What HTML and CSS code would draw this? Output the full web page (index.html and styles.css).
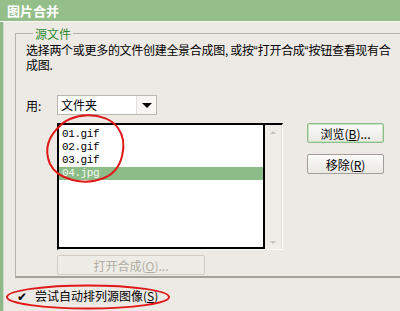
FILE: index.html
```html
<!DOCTYPE html>
<html lang="zh-CN">
<head>
    <meta charset="UTF-8">
    <title>图片合并</title>
    <link rel="stylesheet" href="styles.css">
</head>
<body>
    <div class="titlebar">图片合并</div>
    <div class="window">
        <div class="edge"></div>
        <div class="content">
            <fieldset class="group">
                <legend>源文件</legend>
                <p class="desc">选择两个或更多的文件创建全景合成图, 或按<span class="q">“</span>打开合成<span class="q">“</span>按钮查看现有合<br>成图.</p>
                <div class="use-row">
                    <span class="label">用:</span>
                    <div class="combo">
                        <span class="combo-text">文件夹</span>
                        <span class="combo-btn"><span class="arrow"></span></span>
                    </div>
                </div>
                <div class="list-row">
                    <div class="listbox">
                        <ul class="items">
                            <li>01.gif</li>
                            <li>02.gif</li>
                            <li>03.gif</li>
                            <li class="selected">04.jpg</li>
                        </ul>
                        <div class="scroll">
                            <span class="sarrow up"></span>
                            <span class="sarrow down"></span>
                        </div>
                    </div>
                    <div class="side-buttons">
                        <button class="btn default">浏览(<u>B</u>)...</button>
                        <button class="btn">移除(<u>R</u>)</button>
                    </div>
                </div>
                <button class="btn disabled open-btn">打开合成(<u>O</u>)...</button>
            </fieldset>
            <label class="check-row">
                <span class="check">✔</span>
                <span>尝试自动排列源图像(<u>S</u>)</span>
            </label>
        </div>
    </div>
    <svg class="marks" width="400" height="311" viewBox="0 0 400 311">
        <path d="M58 128 C70 112 105 110 118 128 C128 142 124 170 104 178 C84 186 58 180 50 164 C44 150 48 136 62 124" fill="none" stroke="#e01818" stroke-width="2"/>
        <ellipse cx="88" cy="297" rx="81" ry="11.5" fill="none" stroke="#e01818" stroke-width="2"/>
    </svg>
</body>
</html>
```
FILE: styles.css
```css
body {
    margin: 0;
    width: 400px;
    height: 311px;
    overflow: hidden;
    position: relative;
    background-color: #edeae5;
    font-family: "Noto Sans CJK SC", "Liberation Sans", sans-serif;
    font-size: 12px;
    color: #000;
}

.titlebar {
    height: 22px;
    line-height: 22px;
    padding-left: 7px;
    background-color: #94bf8b;
    color: #fff;
    font-weight: bold;
    font-size: 13px;
    border-bottom: 1px solid #f7f7f3;
    box-sizing: border-box;
}

.window {
    display: flex;
    height: 289px;
}

.edge {
    width: 3px;
    background-color: #8fb98a;
    border-right: 1px solid #c9d9c4;
}

.content {
    flex: 1;
    padding-left: 11px;
    padding-top: 5px;
}

.group {
    margin: 0;
    margin-right: -12px;
    padding: 0 0 7px 10px;
    border: 1px solid #b4b2a8;
    border-bottom: 2px solid #a3a198;
    border-right: none;
    height: 251px;
    box-sizing: border-box;
}

.group legend {
    color: #2f8a2f;
    padding: 0 2px;
    margin-left: 7px;
    font-size: 12px;
    line-height: 13px;
}

.desc {
    margin: 3px 0 0;
    line-height: 14px;
    white-space: nowrap;
    letter-spacing: -0.3px;
}

.desc .q {
    font-family: "Liberation Sans", sans-serif;
    letter-spacing: 0;
}

.use-row {
    display: flex;
    align-items: center;
    margin-top: 23px;
}

.label {
    width: 31px;
}

.combo {
    display: flex;
    width: 100px;
    height: 20px;
    background-color: #fff;
    border: 1px solid #b9b7ae;
    box-sizing: border-box;
}

.combo-text {
    flex: 1;
    padding-left: 3px;
    line-height: 18px;
}

.combo-btn {
    width: 19px;
    display: flex;
    align-items: center;
    justify-content: center;
    background-color: #f7f6f2;
    border-left: 1px solid #e2e0d8;
}

.arrow {
    width: 0;
    height: 0;
    border-left: 5px solid transparent;
    border-right: 5px solid transparent;
    border-top: 5px solid #000;
}

.list-row {
    display: flex;
    margin-top: 8px;
    margin-left: 31px;
}

.listbox {
    display: flex;
    width: 226px;
    height: 127px;
    border-top: 2px solid #000;
    border-left: 2px solid #000;
    border-right: 1px solid #fafaf7;
    border-bottom: 1px solid #fafaf7;
    box-sizing: border-box;
}

.items {
    flex: 1;
    margin: 0;
    padding: 3px 0 0;
    list-style: none;
    background-color: #fff;
    border-right: 2px solid #000;
    border-bottom: 2px solid #000;
    font-family: "Liberation Mono", monospace;
    font-size: 11px;
}

.items li {
    height: 13px;
    line-height: 13px;
    padding-left: 3px;
    letter-spacing: -0.4px;
}

.items li.selected {
    background-color: #8cbd88;
    color: #f2f7ee;
}

.scroll {
    width: 17px;
    display: flex;
    flex-direction: column;
    justify-content: space-between;
    align-items: center;
    padding: 6px 0 5px;
    background-color: #efede8;
    border-right: 1px solid #e0ded6;
    box-sizing: border-box;
}

.sarrow {
    width: 0;
    height: 0;
    border-left: 3px solid transparent;
    border-right: 3px solid transparent;
}

.sarrow.up {
    border-bottom: 3px solid #c4c2ba;
}

.sarrow.down {
    border-top: 3px solid #c4c2ba;
}

.side-buttons {
    display: flex;
    flex-direction: column;
    gap: 11px;
    margin-left: 24px;
}

.btn {
    width: 77px;
    height: 20px;
    padding: 0;
    font-family: inherit;
    font-size: 12px;
    color: #000;
    background: linear-gradient(#fbfbf9, #e9e8e2);
    border: 1px solid #9f9e98;
    border-radius: 2px;
}

.btn.default {
    border-color: #8fbf8a;
    box-shadow: inset 0 0 0 1px #c8e0c2;
}

.btn.disabled {
    color: #aeaca3;
    background: #eeece7;
    border-color: #cfcdc4;
}

.open-btn {
    display: block;
    width: 148px;
    margin-top: 5px;
    margin-left: 31px;
}

.check-row {
    display: flex;
    align-items: center;
    gap: 8px;
    margin-top: 9px;
    padding-left: 2px;
}

.check {
    font-size: 12px;
    line-height: 12px;
}

.marks {
    position: absolute;
    left: 0;
    top: 0;
    pointer-events: none;
}
```
